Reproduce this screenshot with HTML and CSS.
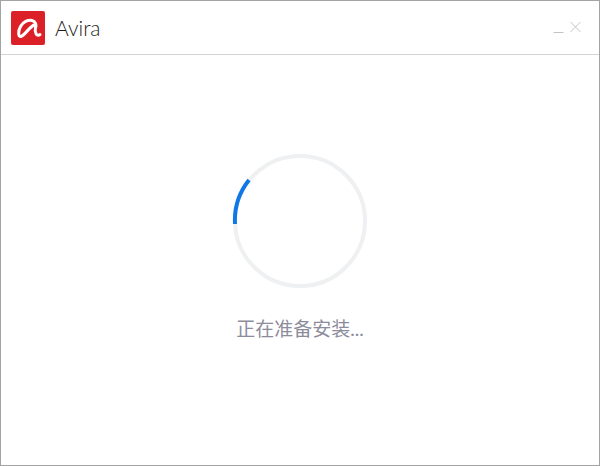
FILE: index.html
```html
<!DOCTYPE html>
<html lang="en">
<head>
    <meta charset="UTF-8">
    <meta name="viewport" content="width=device-width, initial-scale=1.0">
    <title>Avira</title>
    <link rel="stylesheet" href="styles.css">
</head>
<body>

    <div class="window">
        <!-- Title bar -->
        <div class="titlebar">
            <div class="logo">
                <svg width="34" height="34" viewBox="0 0 34 34">
                    <path d="M24 13.5C19 15 14 24 10 25.5C7 26 7 20 9.5 15.5C12 11 17 8.5 21 9.5C25 10.5 25.5 14 24.5 17C23.5 21 25.5 26 29 23.5" fill="none" stroke="#fff" stroke-width="3" stroke-linecap="round" stroke-linejoin="round"/>
                </svg>
            </div>
            <span class="app-name">Avira</span>
            <div class="controls">
                <svg width="30" height="14" viewBox="0 0 30 14">
                    <path d="M0.5 12.5H10.5" stroke="#c4c4c4" stroke-width="1" fill="none"/>
                    <path d="M17.5 2L27.5 12M27.5 2L17.5 12" stroke="#c4c4c4" stroke-width="1" fill="none"/>
                </svg>
            </div>
        </div>

        <!-- Progress -->
        <div class="content">
            <svg class="spinner" width="136" height="136" viewBox="0 0 136 136">
                <circle cx="68" cy="68" r="65" fill="none" stroke="#eef0f2" stroke-width="4"/>
                <path d="M3 71A65 65 0 0 1 17 27" fill="none" stroke="#0f78e6" stroke-width="4"/>
            </svg>
            <p class="status">正在准备安装...</p>
        </div>
    </div>

</body>
</html>
```

FILE: styles.css
```css
html, body {
    margin: 0;
    padding: 0;
}

body {
    width: 600px;
    height: 466px;
    overflow: hidden;
    background-color: #fff;
}

.window {
    box-sizing: border-box;
    width: 600px;
    height: 466px;
    border: 1px solid #a3a3a3;
    display: flex;
    flex-direction: column;
    font-family: "Lato", "Noto Sans CJK SC", sans-serif;
}

.titlebar {
    box-sizing: border-box;
    height: 54px;
    flex-shrink: 0;
    padding: 0 16px 0 10px;
    border-bottom: 1px solid #d4d4d4;
    display: flex;
    align-items: center;
}

.logo {
    width: 34px;
    height: 34px;
    border-radius: 2px;
    background-color: #dc2027;
}

.logo svg {
    display: block;
}

.app-name {
    margin-left: 10px;
    font-size: 21px;
    font-weight: 300;
    color: #1c1c1c;
}

.controls {
    margin-left: auto;
    height: 14px;
    margin-top: -1px;
}

.controls svg {
    display: block;
}

.content {
    flex: 1;
    padding-top: 98px;
    display: flex;
    flex-direction: column;
    align-items: center;
}

.spinner {
    display: block;
}

.status {
    margin: 27px 0 0;
    font-size: 19px;
    font-weight: 400;
    line-height: 26px;
    color: #8c8c9c;
}
```
